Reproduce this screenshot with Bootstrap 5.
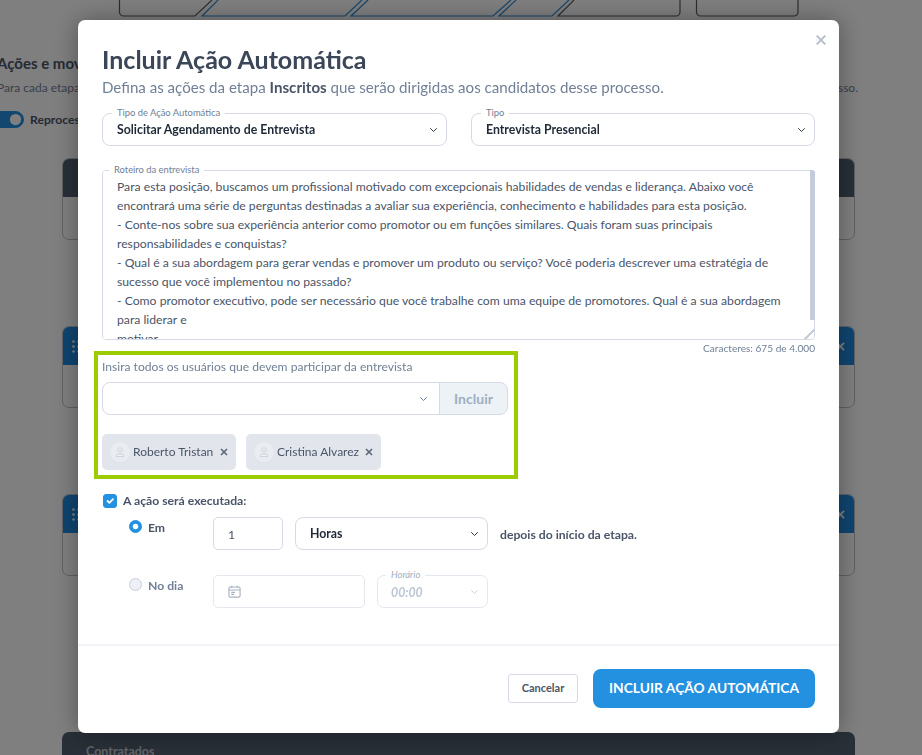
<!DOCTYPE html>
<html lang="pt-BR">
<head>
<meta charset="utf-8">
<title>Incluir Ação Automática</title>
<link href="https://cdn.jsdelivr.net/npm/bootstrap@5.3.0/dist/css/bootstrap.min.css" rel="stylesheet">
<style>
html,body{height:100%;overflow:hidden}
body{font-family:"Lato","Liberation Sans",sans-serif;color:#4a5568;font-size:12.2px;background:#fff}
.bgpage{height:755px;overflow:hidden;position:relative}
.stage-svg{display:block;width:922px;height:17px}
.bg-title{font-size:15px;font-weight:700;color:#4a5568;margin:34px 0 0 -3px;line-height:24px;white-space:nowrap}
.bg-sub{width:861px;margin:4px 0 0 -3px;font-size:12px;line-height:18px;color:#718096}
.bg-toggle{margin:14px 0 0 -8px;gap:6px;font-weight:700;line-height:17px;height:17px}
.bg-toggle input.form-check-input{width:32px;height:17px;margin:0;background-color:#2490e0;border-color:#2490e0;float:none}
.bg-switch{padding:0;min-height:0;margin:0}
.stage-card{width:793px;height:82px;margin-left:62px;border:1px solid #bcc3cc;border-radius:7px;overflow:hidden}
.stage-first{margin-top:30px}
.stage-next{margin-top:86px}
.stage-head{height:38px;color:#fff;padding:0 9px}
.head-dark{background:#525f70}
.head-blue{background:#1f8ae0}
.stage-last{width:793px;height:60px;margin:156px 0 0 62px;background:#525f70;border-radius:7px 7px 0 0;padding:11px 24px;color:#bfc5cf;font-weight:700;font-size:12.5px}
.grip{width:8px;height:13px}
.card-x{width:9px;height:9px}

.dialog-place{max-width:761px;width:761px;margin:20px 0 0 78px}
.dialog-box{height:713px;border:0;border-radius:7px;box-shadow:0 0 24px rgba(0,0,0,.35)}
.dialog-close{right:13px;top:15px;background:none;border:0;padding:0;line-height:0}
.dialog-close svg{width:10px;height:10px}
.dialog-body{padding:23px 24px 0;flex:1 1 auto}
.dialog-title{font-size:25px;line-height:32px;font-weight:700;color:#3b4658;margin:0 0 1px}
.dialog-sub{font-size:15.1px;line-height:22px;color:#718096;margin:0 0 15px}
.dialog-sub b{color:#4a5568;font-weight:700}
.two-cols{gap:24px;margin-bottom:24px}
.two-cols>.fbox{width:345px}
.two-cols>.fbox+.fbox{width:344px}
.fbox{position:relative}
.flabel{position:absolute;left:10px;top:-6px;padding:0 5px;background:#fff;font-size:9.4px;line-height:12px;color:#718096;z-index:6}
.flabel-area{left:7px}
.fselect{height:33px;border:1px solid #d5dae6;border-radius:8px;padding:2px 28px 0 14px;font-size:12.3px;font-weight:700;color:#1f2937;background-size:9px 8px;background-position:right 8px center;box-shadow:none}
.farea{display:block;width:713px;height:170px;border:1px solid #d5dae6;border-radius:4px;padding:6px 0 0 14px;font-size:12.2px;line-height:19px;color:#4a5568;white-space:pre;overflow-y:scroll;overflow-x:hidden;resize:vertical;box-shadow:none}
.farea::-webkit-resizer{background:linear-gradient(135deg,transparent 65%,#c3ccd8 65%,#c3ccd8 75%,transparent 75%)}
.area-thumb{position:absolute;right:0;top:0;width:5px;height:150px;background:#c3ccd8;border-radius:0 3px 0 0;z-index:5}
.charcount{font-size:10.1px;line-height:16px;color:#718096;margin-bottom:-5px}
.users-box{width:424px;height:128px;margin-left:-8px;border:4px solid #9ccb00;padding:3px 6px 0 4px}
.users-label{font-size:12.1px;line-height:18px;color:#718096;margin-bottom:6px}
.users-select{height:33px;border-color:#d5dae6;border-radius:8px 0 0 8px;background-size:9px 8px;background-position:right 11px center;box-shadow:none;background-image:url("data:image/svg+xml,%3csvg xmlns='http://www.w3.org/2000/svg' viewBox='0 0 16 16'%3e%3cpath fill='none' stroke='%23718096' stroke-linecap='round' stroke-linejoin='round' stroke-width='2' d='m2 5 6 6 6-6'/%3e%3c/svg%3e")}
.users-add{width:69px;height:33px;background:#edf2f7;border:1px solid #d5dae6;border-radius:0 8px 8px 0;color:#a0aec0;font-weight:700;font-size:14px;padding:0;opacity:1}
.users-add:disabled{background:#edf2f7;border-color:#d5dae6;color:#a0aec0;opacity:1}
.chips{gap:10px;margin-top:19px}
.chip-user{height:36px;width:134px;padding:0 8px;background:#e2e6ec;border-radius:5px;font-size:12px;color:#4a5568}
.chip-wide{width:135px}
.chip-ava{width:20px;height:20px;border-radius:50%;background:#e9ecf1;flex:none}
.chip-ava svg{width:12px;height:12px}
.chip-name{margin-left:3px}
.chip-x{width:8px;height:8px;margin-left:auto}
.exec-row{margin-top:14px;gap:6px;height:16px;font-weight:700;line-height:16px}
.exec-row .form-check-input{width:14px;height:14px;margin:0 0 0 1px;border-radius:3px;background-color:#2490e0;border-color:#2490e0;flex:none}
.when-row{margin-left:27px;margin-top:8px;height:33px}
.when-row+.when-row{margin-top:25px}
.radio-cell{width:84px;gap:6px;padding-top:3px;font-weight:700;line-height:16px}
.radio-cell .form-check-input{width:13px;height:13px;margin:0;flex:none}
.radio-cell .form-check-input:checked{background-color:#2490e0;border-color:#2490e0}
.radio-off .form-check-input{background-color:#edf0f4;border-color:#c8ced8;opacity:1}
.radio-off{color:#718096}
.num-input{width:70px;height:33px;border:1px solid #d5dae6;border-radius:5px;padding:1px 14px 0;font-size:12.3px;color:#4a5568;box-shadow:none}
.hours{width:193px;margin-left:12px}
.after-text{margin-left:12px;font-weight:700;line-height:35px}
.date-box{width:152px;height:33px;border:1px solid #e4e8ee;border-radius:5px;padding-left:14px;background:#fff}
.date-box svg{width:13px;height:13px}
.time-box{width:111px;margin-left:12px}
.time-box .flabel{font-style:italic;color:#a0aec0;left:9px;top:-6px}
.time-sel{height:33px;width:111px;border:1px solid #e4e8ee;border-radius:7px;padding:3px 24px 0 13px;font-size:12.3px;font-style:italic;font-weight:700;background-size:9px 8px;background-position:right 8px center;background-image:url("data:image/svg+xml,%3csvg xmlns='http://www.w3.org/2000/svg' viewBox='0 0 16 16'%3e%3cpath fill='none' stroke='%23cbd5e0' stroke-linecap='round' stroke-linejoin='round' stroke-width='2' d='m2 5 6 6 6-6'/%3e%3c/svg%3e")}
.time-sel:disabled{background-color:#fff;color:#bcc5d2}
.dialog-foot{height:89px;border-top:2px solid #f1f3f6;padding:0 24px 3px;gap:15px}
.btn-cancel{width:70px;height:29px;background:#fff;border:1px solid #d5dae6;border-radius:3px;color:#4a5568;font-weight:700;font-size:11px;padding:0}
.btn-main{width:222px;height:39px;background:#2490e0;border:0;border-radius:8px;color:#fff;font-weight:700;font-size:13.8px;padding:0}
</style>
</head>
<body class="modal-open">
<div class="bgpage">
  <svg class="stage-svg" viewBox="0 0 922 17" fill="none" stroke-width="1.2" aria-hidden="true">
    <path d="M119.5 0V12a4 4 0 0 0 4 4H195L212 0" stroke="#585c62"/>
    <path d="M218 0L202 16H345L362 0" stroke="#2f8bd4"/>
    <path d="M368 0L351 16H493L511 0" stroke="#2f8bd4"/>
    <path d="M516 0L499 16H552L569 0" stroke="#2f8bd4"/>
    <path d="M574 0L558 16H676a4 4 0 0 0 4-4V0" stroke="#585c62"/>
    <path d="M696.5 0V12a4 4 0 0 0 4 4H794a4 4 0 0 0 4-4V0" stroke="#585c62"/>
  </svg>
  <div class="bg-title">Ações e movimentações automáticas</div>
  <div class="bg-sub d-flex justify-content-between"><span>Para cada etapa do seu processo</span><span>deste processo.</span></div>
  <div class="bg-toggle d-flex align-items-center">
    <div class="form-check form-switch bg-switch"><input class="form-check-input" type="checkbox" role="switch" checked aria-label="Reprocessar"></div>
    <span>Reprocessar</span>
  </div>
  <div class="stage-card stage-first"><div class="stage-head head-dark"></div></div>
  <div class="stage-card stage-next"><div class="stage-head head-blue d-flex align-items-center justify-content-between">
    <svg class="grip" viewBox="0 0 8 13" fill="#fff"><circle cx="1.5" cy="1.5" r="1.3"/><circle cx="6.5" cy="1.5" r="1.3"/><circle cx="1.5" cy="6.5" r="1.3"/><circle cx="6.5" cy="6.5" r="1.3"/><circle cx="1.5" cy="11.5" r="1.3"/><circle cx="6.5" cy="11.5" r="1.3"/></svg>
    <svg class="card-x" viewBox="0 0 10 10" stroke="#fff" stroke-width="2"><path d="M1 1l8 8M9 1l-8 8"/></svg>
  </div></div>
  <div class="stage-card stage-next"><div class="stage-head head-blue d-flex align-items-center justify-content-between">
    <svg class="grip" viewBox="0 0 8 13" fill="#fff"><circle cx="1.5" cy="1.5" r="1.3"/><circle cx="6.5" cy="1.5" r="1.3"/><circle cx="1.5" cy="6.5" r="1.3"/><circle cx="6.5" cy="6.5" r="1.3"/><circle cx="1.5" cy="11.5" r="1.3"/><circle cx="6.5" cy="11.5" r="1.3"/></svg>
    <svg class="card-x" viewBox="0 0 10 10" stroke="#fff" stroke-width="2"><path d="M1 1l8 8M9 1l-8 8"/></svg>
  </div></div>
  <div class="stage-last">Contratados</div>
</div>

<div class="modal-backdrop fade show"></div>
<div class="modal fade show d-block" tabindex="-1" role="dialog" aria-modal="true">
  <div class="modal-dialog dialog-place">
    <div class="modal-content dialog-box">
      <button type="button" class="dialog-close position-absolute" aria-label="Fechar">
        <svg viewBox="0 0 10 10" stroke="#b4bdca" stroke-width="1.9" fill="none"><path d="M.7.7l8.6 8.6M9.3.7L.7 9.3"/></svg>
      </button>
      <div class="dialog-body">
        <h2 class="dialog-title">Incluir Ação Automática</h2>
        <p class="dialog-sub">Defina as ações da etapa <b>Inscritos</b> que serão dirigidas aos candidatos desse processo.</p>

        <div class="d-flex two-cols">
          <div class="fbox">
            <span class="flabel">Tipo de Ação Automática</span>
            <select class="form-select fselect" aria-label="Tipo de Ação Automática"><option>Solicitar Agendamento de Entrevista</option></select>
          </div>
          <div class="fbox">
            <span class="flabel">Tipo</span>
            <select class="form-select fselect" aria-label="Tipo"><option>Entrevista Presencial</option></select>
          </div>
        </div>

        <div class="fbox">
          <span class="flabel flabel-area">Roteiro da entrevista</span>
          <textarea class="form-control farea" aria-label="Roteiro da entrevista">Para esta posição, buscamos um profissional motivado com excepcionais habilidades de vendas e liderança. Abaixo você
encontrará uma série de perguntas destinadas a avaliar sua experiência, conhecimento e habilidades para esta posição.
- Conte-nos sobre sua experiência anterior como promotor ou em funções similares. Quais foram suas principais
responsabilidades e conquistas?
- Qual é a sua abordagem para gerar vendas e promover um produto ou serviço? Você poderia descrever uma estratégia de
sucesso que você implementou no passado?
- Como promotor executivo, pode ser necessário que você trabalhe com uma equipe de promotores. Qual é a sua abordagem
para liderar e
motivar
os membros da equipe?</textarea>
          <span class="area-thumb"></span>
        </div>
        <div class="charcount text-end">Caracteres: 675 de 4.000</div>

        <div class="users-box">
          <div class="users-label">Insira todos os usuários que devem participar da entrevista</div>
          <div class="input-group flex-nowrap">
            <select class="form-select users-select" aria-label="Usuários"><option></option></select>
            <button class="btn users-add" type="button" disabled>Incluir</button>
          </div>
          <div class="d-flex chips">
            <div class="d-flex align-items-center chip-user">
              <span class="chip-ava d-flex align-items-center justify-content-center"><svg viewBox="0 0 12 12" fill="none" stroke="#cfd5de" stroke-width="1"><circle cx="6" cy="3.6" r="2"/><path d="M2 10.5c0-2 1.8-3 4-3s4 1 4 3z"/></svg></span>
              <span class="chip-name">Roberto Tristan</span>
              <svg class="chip-x" viewBox="0 0 8 8" stroke="#5a6678" stroke-width="1.6"><path d="M1 1l6 6M7 1L1 7"/></svg>
            </div>
            <div class="d-flex align-items-center chip-user chip-wide">
              <span class="chip-ava d-flex align-items-center justify-content-center"><svg viewBox="0 0 12 12" fill="none" stroke="#cfd5de" stroke-width="1"><circle cx="6" cy="3.6" r="2"/><path d="M2 10.5c0-2 1.8-3 4-3s4 1 4 3z"/></svg></span>
              <span class="chip-name">Cristina Alvarez</span>
              <svg class="chip-x" viewBox="0 0 8 8" stroke="#5a6678" stroke-width="1.6"><path d="M1 1l6 6M7 1L1 7"/></svg>
            </div>
          </div>
        </div>

        <label class="d-flex align-items-center exec-row"><input class="form-check-input" type="checkbox" checked>A ação será executada:</label>

        <div class="d-flex when-row">
          <label class="d-flex align-items-start radio-cell"><input class="form-check-input mt-0" type="radio" name="quando" checked><span>Em</span></label>
          <input class="form-control num-input" type="text" value="1" aria-label="Quantidade">
          <select class="form-select fselect hours" aria-label="Unidade"><option>Horas</option></select>
          <span class="after-text">depois do início da etapa.</span>
        </div>
        <div class="d-flex when-row">
          <label class="d-flex align-items-start radio-cell radio-off"><input class="form-check-input mt-0" type="radio" name="quando"><span>No dia</span></label>
          <div class="d-flex align-items-center date-box">
            <svg viewBox="0 0 14 14" fill="none" stroke="#a8b2c0" stroke-width="1.2"><rect x="1" y="2.2" width="12" height="10.8" rx="1.4"/><path d="M1 5.4h12M4 .7v2.6M10 .7v2.6"/><path d="M3.5 8h4M3.5 10.2h3" stroke-width="1.4"/></svg>
          </div>
          <div class="fbox time-box">
            <span class="flabel">Horário</span>
            <select class="form-select time-sel" disabled aria-label="Horário"><option>00:00</option></select>
          </div>
        </div>
      </div>
      <div class="d-flex align-items-center justify-content-end dialog-foot">
        <button type="button" class="btn btn-cancel">Cancelar</button>
        <button type="button" class="btn btn-main">INCLUIR AÇÃO AUTOMÁTICA</button>
      </div>
    </div>
  </div>
</div>
<script src="https://cdn.jsdelivr.net/npm/bootstrap@5.3.0/dist/js/bootstrap.bundle.min.js"></script>
</body>
</html>
